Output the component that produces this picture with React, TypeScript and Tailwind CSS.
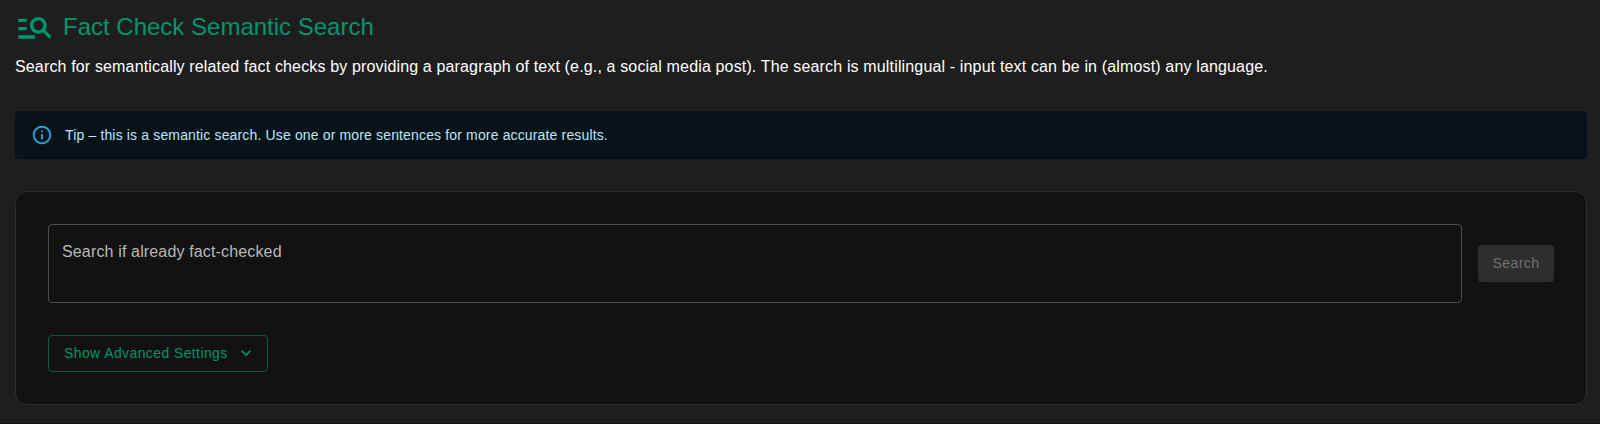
import React from "react";

function ManageSearchIcon() {
  return (
    <svg viewBox="0 0 24 24" className="size-10 shrink-0 fill-current" aria-hidden="true">
      <path d="M7 9H2V7h5v2zm0 3H2v2h5v-2zm13.59 7-3.83-3.83c-.8.52-1.74.83-2.76.83-2.76 0-5-2.24-5-5s2.24-5 5-5 5 2.24 5 5c0 1.02-.31 1.96-.83 2.75L22 17.59 20.59 19zM17 11c0-1.65-1.35-3-3-3s-3 1.35-3 3 1.35 3 3 3 3-1.35 3-3zM2 19h10v-2H2v2z" />
    </svg>
  );
}

function InfoIcon() {
  return (
    <svg viewBox="0 0 24 24" className="size-[22px] shrink-0 fill-[#29b6f6] opacity-90" aria-hidden="true">
      <path d="M11 7h2v2h-2zM11 11h2v6h-2zM12 2C6.48 2 2 6.48 2 12s4.48 10 10 10 10-4.48 10-10S17.52 2 12 2zm0 18c-4.41 0-8-3.59-8-8s3.59-8 8-8 8 3.59 8 8-3.59 8-8 8z" />
    </svg>
  );
}

function ChevronIcon() {
  return (
    <svg viewBox="0 0 24 24" className="size-5 shrink-0 fill-current" aria-hidden="true">
      <path d="M7.41 8.59 12 13.17l4.59-4.58L18 10l-6 6-6-6z" />
    </svg>
  );
}

export default function App() {
  return (
    <main className="flex h-[424px] flex-col border-b border-[#160f13] bg-[#1e1e1e] pr-[13px] pl-[15px] font-['Liberation_Sans',Arial,sans-serif]">
      <header className="mt-[7px] flex h-10 items-center gap-2 text-[#00966d]">
        <ManageSearchIcon />
        <h1 className="text-2xl">Fact Check Semantic Search</h1>
      </header>
      <p className="mt-2 text-base leading-6 tracking-[0.00938em] text-white">
        Search for semantically related fact checks by providing a paragraph of text (e.g., a social media post). The
        search is multilingual - input text can be in (almost) any language.
      </p>

      <div className="mt-8 flex h-12 items-center gap-3 rounded bg-[#071318] px-4" role="alert">
        <InfoIcon />
        <span className="text-sm tracking-[0.01071em] text-[#b8e7fb]">
          Tip – this is a semantic search. Use one or more sentences for more accurate results.
        </span>
      </div>

      <section className="mt-8 flex h-[214px] flex-col items-start gap-8 rounded-[12px] border border-[#2e2e2e] bg-[#121212] p-8">
        <div className="flex w-full items-center gap-4">
          <textarea
            className="block h-[79px] flex-1 resize-none rounded border border-[#4d4d4d] bg-transparent px-[13px] py-[15px] text-base leading-[23px] tracking-[0.00938em] text-white outline-none placeholder:text-[#b8b8b8]"
            placeholder="Search if already fact-checked"
          />
          <button disabled className="h-[37px] w-[76px] rounded bg-[#2e2e2e] pb-0.5 text-sm tracking-[0.02857em] text-[#717171]">
            Search
          </button>
        </div>
        <button className="flex h-[37px] w-[220px] items-center gap-2 rounded border border-[#055a43] pb-0.5 pl-[15px] text-sm tracking-[0.02857em] text-[#00966d]">
          Show Advanced Settings
          <ChevronIcon />
        </button>
      </section>
    </main>
  );
}
